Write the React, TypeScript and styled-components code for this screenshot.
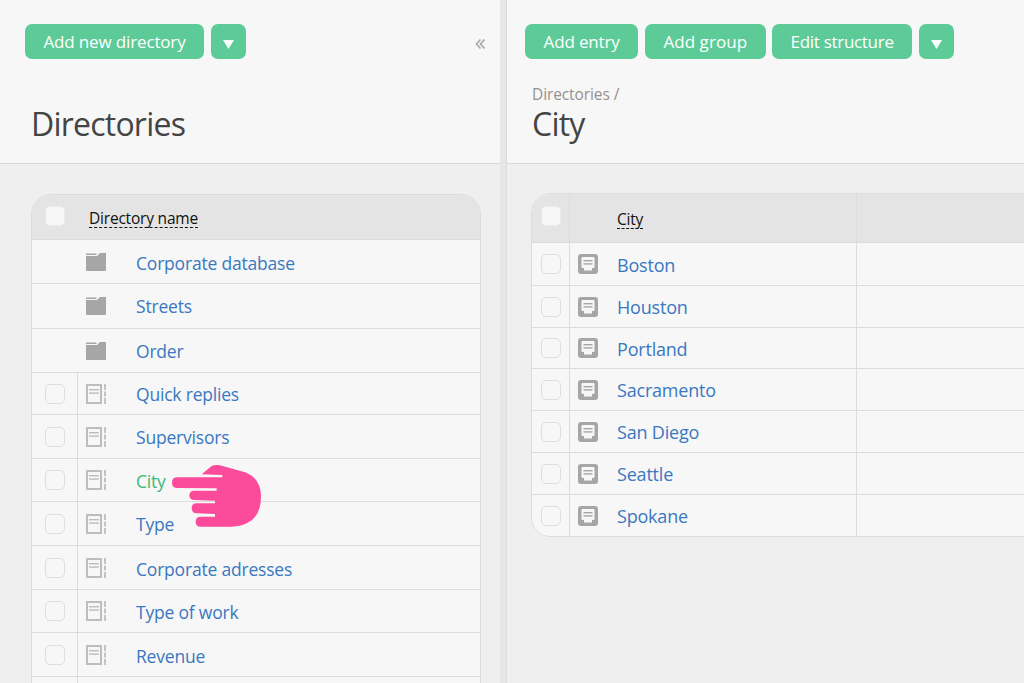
import React from "react";
import styled, { createGlobalStyle } from "styled-components";

const Global = createGlobalStyle`
  html, body { margin: 0; padding: 0; height: 683px; overflow: hidden; background: #efefef; }
  * { box-sizing: border-box; }
  body { font-family: "Open Sans", "Noto Sans", sans-serif; }
`;

const Page = styled.div`
  position: relative;
  display: flex;
  width: 1024px;
  height: 683px;
  overflow: hidden;
`;
const Panel = styled.section<{ $w: number }>`
  flex: 0 0 ${(p) => p.$w}px;
  width: ${(p) => p.$w}px;
  height: 683px;
  overflow: hidden;
  background: #efefef;
`;
const Splitter = styled.div`
  flex: 0 0 7px;
  background: #e7e7e7;
  border-right: 1px solid #dcdcdc;
`;
const Header = styled.header<{ $left: number }>`
  position: relative;
  height: 164px;
  background: #f7f7f7;
  border-bottom: 1px solid #d9d9d9;
  padding: 24px 0 0 ${(p) => p.$left}px;
`;
const Toolbar = styled.div`
  display: flex;
  gap: 6.7px;
`;
const Button = styled.button<{ $w: number; $ls?: number }>`
  width: ${(p) => p.$w}px;
  height: 35px;
  padding: 0;
  border: 0;
  border-radius: 7px;
  background: #5ccb97;
  color: #fff;
  font: 400 17px/35px "Open Sans", sans-serif;
  letter-spacing: ${(p) => p.$ls ?? -0.15}px;
`;
const Caret = styled(Button)`
  display: flex;
  align-items: center;
  justify-content: center;
  padding-top: 6px;
`;
const Collapse = styled.svg`
  position: absolute;
  left: 475px;
  top: 39px;
`;
const TitleBlock = styled.div<{ $left: number; $top: number }>`
  margin: ${(p) => p.$top}px 0 0 ${(p) => p.$left}px;
`;
const Crumb = styled.div`
  color: #969191;
  font-size: 15.5px;
  line-height: 17px;
  letter-spacing: -0.1px;
`;
const Title = styled.h1`
  margin: 0;
  color: #444;
  font: 400 32px/42px "Open Sans", sans-serif;
  letter-spacing: -0.78px;
`;
const Body = styled.div<{ $left: number; $top: number }>`
  padding: ${(p) => p.$top}px 0 0 ${(p) => p.$left}px;
`;
const Table = styled.div<{ $w: number }>`
  width: ${(p) => p.$w}px;
  border: 1px solid #dcdcdc;
  border-radius: 20px 20px 0 0;
  overflow: hidden;
  background: #f7f7f7;
`;
const RightTable = styled(Table)`
  border-radius: 20px 0 0 20px;
`;
const Row = styled.div<{ $h: number; $head?: boolean; $cols: string }>`
  display: grid;
  grid-template-columns: ${(p) => p.$cols};
  height: ${(p) => p.$h}px;
  background: ${(p) => (p.$head ? "#e4e4e4" : "#f7f7f7")};
  border-bottom: 1px solid #dcdcdc;
  &:last-child { border-bottom: 0; }
`;
const CheckCell = styled.div<{ $line?: boolean; $top?: number }>`
  display: flex;
  align-items: ${(p) => (p.$top ? "flex-start" : "center")};
  justify-content: flex-start;
  padding: ${(p) => p.$top || 0}px 0 0 ${(p) => (p.$line ? 9 : 13)}px;
  border-right: 1px solid ${(p) => (p.$line ? "#dcdcdc" : "transparent")};
`;
const LeftCheckCell = styled(CheckCell)`
  padding-left: 13px;
`;
const Check = styled.span<{ $head?: boolean }>`
  display: block;
  width: 20px;
  height: 20px;
  border-radius: 5px;
  background: #f7f7f7;
  border: 1px solid ${(p) => (p.$head ? "#eaeaea" : "#dedede")};
`;
const IconCell = styled.div<{ $line?: boolean }>`
  display: flex;
  align-items: center;
  padding-left: 8px;
  border-right: 1px solid ${(p) => (p.$line ? "#dcdcdc" : "transparent")};
`;
const NameCell = styled.div<{ $green?: boolean; $nudge?: number }>`
  display: flex;
  align-items: center;
  padding-top: ${(p) => p.$nudge || 0}px;
  color: ${(p) => (p.$green ? "#3fb877" : "#3a78c0")};
  font-size: 17.5px;
  letter-spacing: -0.2px;
  white-space: nowrap;
`;
const CityName = styled(NameCell)`
  margin-left: 19px;
  font-size: 18px;
`;
const ColHead = styled.div<{ $pt: number; $pl: number; $line?: boolean }>`
  padding: ${(p) => p.$pt}px 0 0 ${(p) => p.$pl}px;
  border-right: 1px solid ${(p) => (p.$line ? "#dcdcdc" : "transparent")};
`;
const Sortable = styled.span`
  display: inline-block;
  color: #111;
  font-size: 15.5px;
  line-height: 18px;
  letter-spacing: -0.2px;
  white-space: nowrap;
  border-bottom: 1px dashed #111;
`;
const Blank = styled.div``;
const Hand = styled.svg`
  position: absolute;
  left: 165px;
  top: 460px;
`;

const CaretIcon = () => (
  <svg width="11" height="9" viewBox="0 0 11 9"><path d="M0 0h11L5.5 9z" fill="#fff" /></svg>
);
const Folder = () => (
  <svg width="20" height="18" viewBox="0 0 20 18">
    <path d="M0 .5h10.5V2H0z" fill="#a6a6a6" />
    <path d="M0 3h11l3-3h6v17a1 1 0 0 1-1 1H1a1 1 0 0 1-1-1z" fill="#a6a6a6" />
  </svg>
);
const Book = () => (
  <svg width="20" height="20" viewBox="0 0 20 20">
    <rect x="1" y="1" width="14" height="18" fill="none" stroke="#bdbdbd" strokeWidth="2" />
    <rect x="3" y="5" width="10" height="1.4" fill="#bdbdbd" />
    <rect x="3" y="8.4" width="10" height="1.4" fill="#bdbdbd" />
    <rect x="18" y="0" width="2" height="6" fill="#c4c4c4" />
    <rect x="18" y="7.5" width="2" height="5" fill="#c4c4c4" />
    <rect x="18" y="14" width="2" height="6" fill="#c4c4c4" />
  </svg>
);
const Message = () => (
  <svg width="20" height="20" viewBox="0 0 20 20">
    <rect width="20" height="20" rx="3" fill="#a6a6a6" />
    <path d="M4.5 3h11a1 1 0 0 1 1 1v9a1 1 0 0 1-1 1H14v2.5H6V14H4.5a1 1 0 0 1-1-1V4a1 1 0 0 1 1-1z" fill="#f7f7f7" />
    <rect x="5.5" y="6" width="9" height="1.4" fill="#a6a6a6" />
    <rect x="5.5" y="9.2" width="9" height="1.4" fill="#a6a6a6" />
  </svg>
);

const leftCols = "46px 58px 1fr";
const rightCols = "38px 287px 1fr";
const leftRows: { name: string; h: number; folder?: boolean; green?: boolean; nudge?: number }[] = [
  { name: "Corporate database", h: 44, folder: true, nudge: 3 },
  { name: "Streets", h: 45, folder: true },
  { name: "Order", h: 44, folder: true },
  { name: "Quick replies", h: 42 },
  { name: "Supervisors", h: 44 },
  { name: "City", h: 43, green: true, nudge: 2 },
  { name: "Type", h: 44 },
  { name: "Corporate adresses", h: 44, nudge: 2 },
  { name: "Type of work", h: 43, nudge: 2 },
  { name: "Revenue", h: 44, nudge: 2 },
  { name: "", h: 44 },
];
const cities: [string, number, number][] = [
  ["Boston", 43, 2], ["Houston", 42, 0], ["Portland", 41, 2], ["Sacramento", 42, 0],
  ["San Diego", 42, 0], ["Seattle", 42, 0], ["Spokane", 41, 0],
];

export default function App() {
  return (
    <Page>
      <Global />
      <Panel $w={500}>
        <Header $left={25}>
          <Toolbar>
            <Button $w={179}>Add new directory</Button>
            <Caret $w={35}><CaretIcon /></Caret>
          </Toolbar>
          <Collapse width="10" height="10" viewBox="0 0 10 10">
            <path d="M5.5.5 1.5 5l4 4.5M9.5.5 5.5 5l4 4.5" fill="none" stroke="#a8a8a8" strokeWidth="1.6" />
          </Collapse>
          <TitleBlock $left={6} $top={44}>
            <Title>Directories</Title>
          </TitleBlock>
        </Header>
        <Body $left={31} $top={30}>
          <Table $w={450}>
            <Row $h={45} $head $cols={leftCols}>
              <LeftCheckCell $top={11}><Check $head /></LeftCheckCell>
              <ColHead $pt={12} $pl={11}><Sortable>Directory name</Sortable></ColHead>
            </Row>
            {leftRows.map((r, i) => (
              <Row key={i} $h={r.h} $cols={leftCols}>
                <LeftCheckCell $line={!r.folder}>{!r.folder && r.name && <Check />}</LeftCheckCell>
                <IconCell>{r.name && (r.folder ? <Folder /> : <Book />)}</IconCell>
                <NameCell $green={r.green} $nudge={r.nudge}>{r.name}</NameCell>
              </Row>
            ))}
          </Table>
        </Body>
      </Panel>
      <Splitter />
      <Panel $w={517}>
        <Header $left={18}>
          <Toolbar>
            <Button $w={113.3}>Add entry</Button>
            <Button $w={120.6} $ls={0.05}>Add group</Button>
            <Button $w={139.7} $ls={-0.3}>Edit structure</Button>
            <Caret $w={35}><CaretIcon /></Caret>
          </Toolbar>
          <TitleBlock $left={7} $top={27}>
            <Crumb>Directories /</Crumb>
            <Title>City</Title>
          </TitleBlock>
        </Header>
        <Body $left={24} $top={29}>
          <RightTable $w={620}>
            <Row $h={49} $head $cols={rightCols}>
              <CheckCell $top={12} $line><Check $head /></CheckCell>
              <ColHead $pt={14} $pl={47} $line><Sortable>City</Sortable></ColHead>
              <Blank />
            </Row>
            {cities.map(([c, h, n]) => (
              <Row key={c} $h={h} $cols={rightCols}>
                <CheckCell $line><Check /></CheckCell>
                <IconCell $line>
                  <Message />
                  <CityName $nudge={n}>{c}</CityName>
                </IconCell>
                <Blank />
              </Row>
            ))}
          </RightTable>
        </Body>
      </Panel>
      <Hand width="105" height="70" viewBox="0 0 315 210">
        <path
          d="M110 43 L140 18 Q150 13 165 16 L240 37 Q288 55 288 110 Q288 170 245 190 Q225 200 200 200 L107 200 Q92 200 92 185 Q92 170 107 170 L150 170 L150 162 L95 160 Q80 160 80 145 Q80 130 95 130 L150 130 L150 122 L88 120 Q73 120 73 106 Q73 92 88 92 L155 92 L155 85 L37 84 Q21 84 21 68 Q21 52 37 52 L172 52 L172 45 Z"
          fill="#fb4b9a"
        />
      </Hand>
    </Page>
  );
}
